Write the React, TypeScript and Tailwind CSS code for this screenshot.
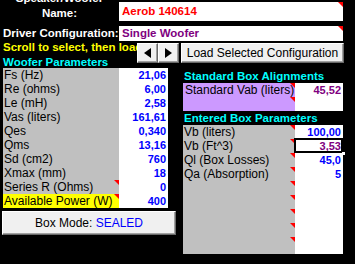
import React from "react";

interface Row {
  label: string;
  value: string;
  color?: string;
  note?: boolean;
  hl?: boolean;
  selected?: boolean;
}

const woofer: Row[] = [
  { label: "Fs (Hz)", value: "21,06" },
  { label: "Re (ohms)", value: "6,00" },
  { label: "Le (mH)", value: "2,58" },
  { label: "Vas (liters)", value: "161,61" },
  { label: "Qes", value: "0,340" },
  { label: "Qms", value: "13,16" },
  { label: "Sd (cm2)", value: "760" },
  { label: "Xmax (mm)", value: "18" },
  { label: "Series R (Ohms)", value: "0", note: true },
  { label: "Available Power (W)", value: "400", note: true, hl: true },
];

const entered: Row[] = [
  { label: "Vb (liters)", value: "100,00", note: true },
  { label: "Vb (Ft^3)", value: "3,53", color: "purple", note: true, selected: true },
  { label: "Ql (Box Losses)", value: "45,0", note: true },
  { label: "Qa (Absorption)", value: "5", note: true },
  { label: "", value: "", note: true },
  { label: "", value: "", note: true },
  { label: "", value: "", note: true },
  { label: "", value: "", note: true },
  { label: "", value: "", note: true },
];

// red comment marker in a cell corner
const Tri = () => (
  <span className="absolute top-0 right-0 w-[5px] h-[5px] bg-[#ff0000] [clip-path:polygon(0_0,100%_0,100%_100%)]" />
);

const btn =
  "bg-[#f0f0f0] border border-t-white border-l-white border-r-[#696969] border-b-[#696969] shadow-[inset_-1px_-1px_0_#a0a0a0] flex items-center justify-center";

export default function App() {
  return (
    <div className="w-[355px] h-[264px] bg-black overflow-hidden font-['Liberation_Sans',Arial,sans-serif] text-[12px] leading-[14px]">
      {/* name */}
      <div className="flex h-[26px] overflow-hidden">
        <div className="w-[119px] -mt-[9px] text-center text-white font-bold text-[11.5px] leading-[14px]">
          <div>Speaker/Woofer</div>
          <div className="mt-[1px]">Name:</div>
        </div>
        <div className="relative mt-[2px] h-[19px] w-[224px] bg-white pl-[3px] text-[#ff0000] font-bold text-[11.5px] leading-[19px]">
          Aerob 140614
          <Tri />
        </div>
      </div>

      {/* driver configuration */}
      <div className="flex h-[15px]">
        <div className="w-[119px] pl-[3px] whitespace-nowrap text-white font-bold text-[11.5px] leading-[15px]">
          Driver Configuration:
        </div>
        <div className="relative h-[15px] w-[224px] bg-white pl-[3px] text-[#800080] font-bold text-[11.5px] leading-[15px]">
          Single Woofer
          <Tri />
        </div>
      </div>

      {/* scroll row + buttons */}
      <div className="flex h-[13px] items-start">
        <div className="w-[137px] overflow-hidden whitespace-nowrap pl-[3px] text-[#ffff00] font-bold text-[11.5px] leading-[13px]">
          Scroll to select, then load
        </div>
        <div className="relative z-10 mt-[2px] flex h-[20px]">
          <button className={`${btn} w-[21px] h-[20px]`}>
            <svg width="7" height="10" viewBox="0 0 7 10">
              <polygon points="7,0 7,10 0,5" fill="#000" />
            </svg>
          </button>
          <button className={`${btn} w-[21px] h-[20px]`}>
            <svg width="7" height="10" viewBox="0 0 7 10">
              <polygon points="0,0 0,10 7,5" fill="#000" />
            </svg>
          </button>
          <button className={`${btn} ml-[2px] w-[163px] h-[20px] text-black text-[12px]`}>
            Load Selected Configuration
          </button>
        </div>
      </div>

      <div className="flex">
        {/* woofer parameters */}
        <div className="ml-[2px] w-[174px]">
          <div className="h-[14px] pl-[1px] pt-[1px] text-[#00ffff] font-bold text-[11.5px] leading-[14px] whitespace-nowrap">
            Woofer Parameters
          </div>
          <div className="ml-[1px] w-[165px]">
            {woofer.map((r) => (
              <div key={r.label} className="flex h-[14px]">
                <div
                  className={`relative w-[116px] pl-[1px] whitespace-nowrap text-black ${
                    r.hl ? "bg-[#ffff00]" : "bg-[#c0c0c0]"
                  }`}
                >
                  {r.label}
                  {r.note && <Tri />}
                </div>
                <div className="w-[49px] bg-white pr-[2px] text-right text-[#0000ff] font-bold text-[11px]">
                  {r.value}
                </div>
              </div>
            ))}
          </div>
          <button className={`${btn} mt-[3px] w-[174px] h-[24px] text-[12px] text-black`}>
            Box Mode:&nbsp;<span className="text-[#0000ff]">SEALED</span>
          </button>
        </div>

        {/* box alignments */}
        <div className="ml-[7px] w-[160px] pt-[15px]">
          <div className="h-[14px] pl-[1px] text-[#00ffff] font-bold text-[11.5px] leading-[14px] whitespace-nowrap">
            Standard Box Alignments
          </div>
          <div className="flex h-[14px]">
            <div className="relative w-[112px] bg-[#cc99ff] pl-[2px] whitespace-nowrap overflow-hidden text-black">
              Standard Vab (liters)
              <Tri />
            </div>
            <div className="w-[48px] bg-white pr-[2px] text-right text-[#800080] font-bold text-[11px]">
              45,52
            </div>
          </div>
          <div className="flex h-[14px]">
            <div className="relative w-[112px] bg-[#cc99ff]">
              <Tri />
            </div>
            <div className="w-[48px] bg-white" />
          </div>
          <div className="h-[14px] pl-[1px] text-[#00ffff] font-bold text-[11.5px] leading-[14px] whitespace-nowrap">
            Entered Box Parameters
          </div>
          {entered.map((r, i) => (
            <div key={i} className="flex h-[14px]">
              <div className="relative w-[112px] bg-[#c0c0c0] pl-[1px] whitespace-nowrap text-black">
                {r.label}
                {r.note && <Tri />}
              </div>
              <div
                className={`relative w-[48px] bg-white pr-[2px] text-right font-bold text-[11px] ${
                  r.color === "purple" ? "text-[#800080]" : "text-[#0000ff]"
                }`}
              >
                {r.value}
                {r.selected && (
                  <>
                    <span className="absolute -left-[1px] -top-[1px] right-0 bottom-0 border-2 border-black" />
                    <span className="absolute -right-[3px] -bottom-[3px] w-[5px] h-[5px] bg-white border border-black" />
                  </>
                )}
              </div>
            </div>
          ))}
          <div className="flex h-[3px]">
            <div className="w-[112px] bg-[#c0c0c0]" />
            <div className="w-[48px] bg-white" />
          </div>
        </div>
      </div>
    </div>
  );
}
